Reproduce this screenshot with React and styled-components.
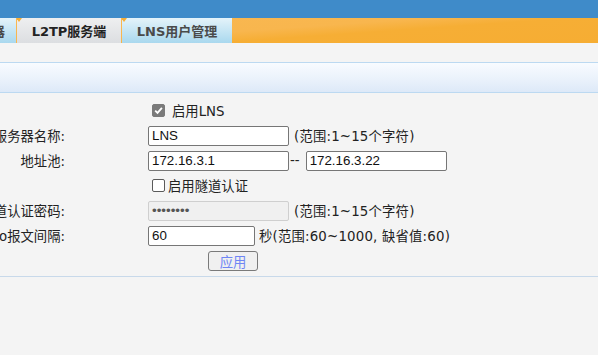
import React from 'react';
import styled, { createGlobalStyle } from 'styled-components';

const GlobalStyle = createGlobalStyle`
    html, body {
        margin: 0;
        padding: 0;
        background: #f4f4f4;
        overflow: hidden;
    }
    body {
        font-family: "DejaVu Sans", "Noto Sans CJK SC", sans-serif;
        font-size: 13.33px;
        color: #222;
    }
`;

const Page = styled.div`
    width: 598px;
    height: 355px;
    background: #f4f4f4;
    overflow: hidden;
`;

const TopBar = styled.div`
    height: 18px;
    background: #3f8bc9;
`;

const TabBar = styled.div`
    height: 25px;
    display: flex;
    background: linear-gradient(176deg, #f9b852 0%, #f8b64e 45%, #f6ae35 60%, #f6ad33 100%);
`;

const Tab = styled.div`
    position: relative;
    box-sizing: border-box;
    width: ${props => props.width}px;
    margin-left: ${props => props.first ? 0 : 1}px;
    padding-right: ${props => props.first ? 11 : 0}px;
    display: flex;
    align-items: center;
    justify-content: ${props => props.first ? 'flex-end' : 'center'};
    overflow: hidden;
    font-family: "DejaVu Sans", "Noto Sans CJK SC", sans-serif;
    font-weight: bold;
    font-size: 13px;
    white-space: nowrap;
    color: ${props => props.active ? '#222' : '#4a4a4a'};
    background: ${props => props.active
        ? 'linear-gradient(#eeeff0, #dcdee1)'
        : 'linear-gradient(#e4f3fa, #a9d8ee)'};

    &::before {
        content: '';
        position: absolute;
        left: -1px;
        top: 0;
        border-left: 3px solid transparent;
        border-right: 3px solid transparent;
        border-top: 4px solid #f6ae35;
        display: ${props => props.first ? 'none' : 'block'};
    }
`;

const Gap = styled.div`
    height: 19px;
`;

const Band = styled.div`
    height: 29px;
    border-top: 1px solid #bcd9f1;
    border-bottom: 1px solid #bcd9f1;
    background: linear-gradient(#f8fbff, #e9f1fb 60%, #dde9f8);
`;

const Form = styled.div`
    padding-top: 5px;
    padding-bottom: 3px;
    border-bottom: 1px solid #c8d9ea;
`;

const Row = styled.div`
    display: grid;
    grid-template-columns: 65px 1fr;
    column-gap: 83px;
    height: 25px;
    align-items: center;
`;

const Label = styled.div`
    display: flex;
    justify-content: flex-end;
    white-space: nowrap;
    color: #222;
`;

const Field = styled.div`
    display: flex;
    align-items: center;
    white-space: nowrap;
`;

const TextInput = styled.input`
    box-sizing: border-box;
    width: ${props => props.width || 141}px;
    height: 20px;
    margin: 0;
    padding: 0 3px;
    font-family: "Liberation Sans", "Noto Sans CJK SC", sans-serif;
    font-size: 13.33px;
    color: ${props => props.disabled ? '#555' : '#111'};
    background: ${props => props.disabled ? '#f0f0f0' : '#fff'};
    border: 1px solid ${props => props.disabled ? '#cfcfcf' : '#767676'};
    border-radius: 2px;
    outline: none;
`;

const Hint = styled.span`
    margin-left: ${props => props.gap ?? 5}px;
    color: #222;
    letter-spacing: ${props => props.spread ? 0.2 : 0}px;
`;

const Check = styled.label`
    display: flex;
    align-items: center;
    margin-left: 4px;
    gap: ${props => props.gap}px;
`;

const Box = styled.span`
    box-sizing: border-box;
    width: 13px;
    height: 13px;
    display: inline-flex;
    align-items: center;
    justify-content: center;
    border-radius: 2px;
    background: ${props => props.checked ? '#7a7a7a' : '#fff'};
    border: 1px solid ${props => props.checked ? '#7a7a7a' : '#5a5a5a'};
`;

const ButtonRow = styled.div`
    display: flex;
    padding-left: 208px;
    height: 25px;
    align-items: center;
`;

const Button = styled.button`
    box-sizing: border-box;
    width: 50px;
    height: 20px;
    padding: 0;
    font-family: "DejaVu Sans", "Noto Sans CJK SC", sans-serif;
    font-size: 13.33px;
    color: #6f86f5;
    background: #f0f0f0;
    border: 1px solid #7a7a7a;
    border-radius: 3px;
`;

function CheckBox({ checked }) {
    return (
        <Box checked={checked}>
            {checked && (
                <svg width="9" height="9" viewBox="0 0 9 9">
                    <path d="M1.2 4.6 L3.5 6.9 L7.9 1.8" fill="none" stroke="#fff" strokeWidth="1.8" />
                </svg>
            )}
        </Box>
    );
}

const tabs = [
    { name: 'LNS服务器', width: 16 },
    { name: 'L2TP服务端', width: 104, active: true },
    { name: 'LNS用户管理', width: 110 },
];

export default function App() {
    return (
        <Page>
            <GlobalStyle />
            <TopBar />
            <TabBar>
                {tabs.map((t, i) => (
                    <Tab key={t.name} width={t.width} active={t.active} first={i === 0}>
                        {t.name}
                    </Tab>
                ))}
            </TabBar>
            <Gap />
            <Band />
            <Form>
                <Row>
                    <Label />
                    <Field>
                        <Check gap={7}>
                            <CheckBox checked />
                            <span>启用LNS</span>
                        </Check>
                    </Field>
                </Row>
                <Row>
                    <Label>LNS服务器名称:</Label>
                    <Field>
                        <TextInput defaultValue="LNS" />
                        <Hint spread>(范围:1~15个字符)</Hint>
                    </Field>
                </Row>
                <Row>
                    <Label>地址池:</Label>
                    <Field>
                        <TextInput defaultValue="172.16.3.1" />
                        <Hint gap={1}>--</Hint>
                        <Hint gap={6}>
                            <TextInput defaultValue="172.16.3.22" />
                        </Hint>
                    </Field>
                </Row>
                <Row>
                    <Label />
                    <Field>
                        <Check gap={3}>
                            <CheckBox />
                            <span>启用隧道认证</span>
                        </Check>
                    </Field>
                </Row>
                <Row>
                    <Label>隧道认证密码:</Label>
                    <Field>
                        <TextInput type="password" defaultValue="12345678" disabled />
                        <Hint spread>(范围:1~15个字符)</Hint>
                    </Field>
                </Row>
                <Row>
                    <Label>Hello报文间隔:</Label>
                    <Field>
                        <TextInput width={107} defaultValue="60" />
                        <Hint gap={4} spread>秒(范围:60~1000, 缺省值:60)</Hint>
                    </Field>
                </Row>
                <ButtonRow>
                    <Button>应用</Button>
                </ButtonRow>
            </Form>
        </Page>
    );
}
